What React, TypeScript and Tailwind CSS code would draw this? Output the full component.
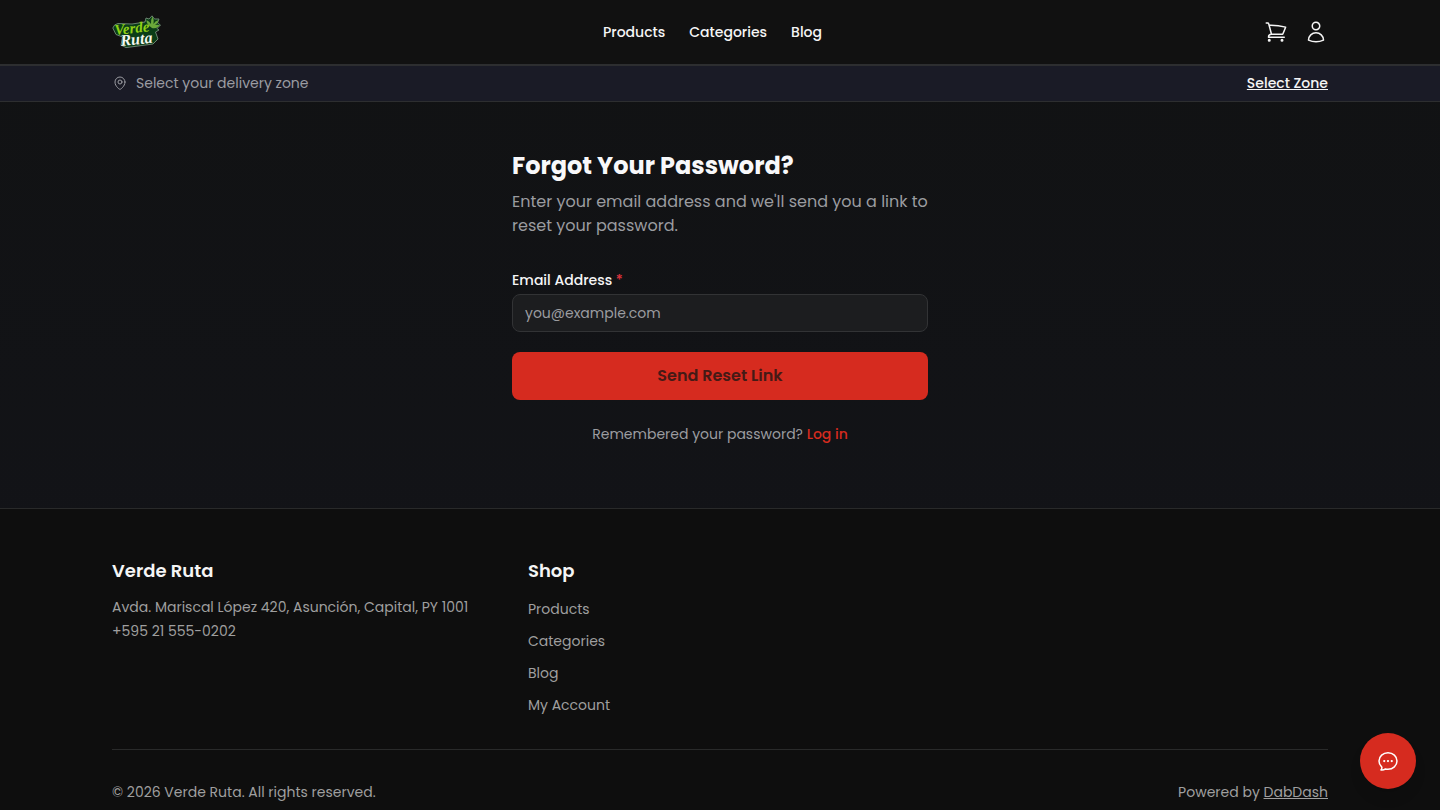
import {
  HiOutlineChatBubbleOvalLeftEllipsis,
  HiOutlineMapPin,
  HiOutlineShoppingCart,
  HiOutlineUser,
} from "react-icons/hi2";

const navLinks = ["Products", "Categories", "Blog"];
const shopLinks = ["Products", "Categories", "Blog", "My Account"];

function Logo() {
  return (
    <svg viewBox="0 0 49 34" className="h-[34px] w-[49px]" role="img" aria-label="Verde Ruta">
      <path
        d="M0.8 13 Q2 9 6 8.5 L20 9 L33 7 L34 3 L37 4 L40 0.8 L42.5 4 L47 4 L45.5 8 L48.5 10 L45 13.5 L47 15 L43.5 17 L46 24 L41 29 L30 30.5 L14 32.6 L9 30 L10.5 22 L4 19.5 Z"
        fill="#0b3d17"
        stroke="#7f9985"
        strokeWidth="0.8"
        strokeLinejoin="round"
      />
      <path
        d="M40 13 Q34 9 34.5 5 Q37.5 6.5 39 9 Q38.5 5 40.5 1.5 Q42.5 5 41.5 9 Q43 6 46.5 5 Q46 8.5 43 10 Q46 9.5 48 10.5 Q44 14 40 13Z"
        fill="#6aa83a"
      />
      <g fontFamily="'Liberation Serif', serif" fontStyle="italic" fontWeight="700">
        <text x="3" y="20" fontSize="15" fill="#8fd016" transform="rotate(-6 3 20)">
          Verde
        </text>
        <text x="9" y="31" fontSize="16" fill="#f4f7f0" transform="rotate(-6 9 31)">
          Ruta
        </text>
      </g>
    </svg>
  );
}

function Header() {
  return (
    <header className="border-b border-[#2d2e30] bg-[#111111]">
      <div className="mx-auto flex h-16 max-w-7xl items-center justify-between px-8">
        <a href="#home">
          <Logo />
        </a>
        <nav className="flex gap-6 text-sm font-medium text-[#f5f5f5]">
          {navLinks.map((label) => (
            <a key={label} href={`#${label.toLowerCase()}`}>
              {label}
            </a>
          ))}
        </nav>
        <div className="flex gap-4 text-[#f5f5f5]">
          <button type="button" aria-label="Cart">
            <HiOutlineShoppingCart className="size-6" />
          </button>
          <button type="button" aria-label="Account">
            <HiOutlineUser className="size-6" />
          </button>
        </div>
      </div>
    </header>
  );
}

function ZoneBar() {
  return (
    <div className="border-y border-[#2d2e30] bg-[#1a1b26]">
      <div className="mx-auto flex max-w-7xl items-center justify-between px-8 pt-[7px] pb-2 text-sm">
        <div className="flex items-center gap-2 text-[#9b9ca2]">
          <HiOutlineMapPin className="size-4" />
          <span>Select your delivery zone</span>
        </div>
        <button type="button" className="font-medium text-[#f5f5f5] underline">
          Select Zone
        </button>
      </div>
    </div>
  );
}

function ForgotPasswordForm() {
  return (
    <main className="mx-auto w-full max-w-md px-4 pt-12 pb-16">
      <h1 className="text-2xl font-bold text-[#f8f8fa]">Forgot Your Password?</h1>
      <p className="mt-2 text-[#9b9ca0]">
        Enter your email address and we'll send you a link to reset your password.
      </p>
      <form className="mt-8" onSubmit={(e) => e.preventDefault()}>
        <label htmlFor="email" className="block text-sm font-medium text-[#f5f5f5]">
          Email Address <span className="text-[#e0343f]">*</span>
        </label>
        <input
          id="email"
          type="email"
          required
          placeholder="you@example.com"
          className="mt-1 block w-full rounded-lg border border-[#323335] bg-[#1c1d1f] px-3 py-2 text-sm text-[#f5f5f5] placeholder:text-[#9b9ca0]"
        />
        <button type="submit" className="mt-5 h-12 w-full rounded-lg bg-[#d62b1f] font-semibold text-[#451a16]">
          Send Reset Link
        </button>
      </form>
      <p className="mt-6 text-center text-sm text-[#9b9ca0]">
        Remembered your password?{" "}
        <a href="#login" className="font-medium text-[#d62b1f]">
          Log in
        </a>
      </p>
    </main>
  );
}

function Footer() {
  return (
    <footer className="border-t border-[#292a2a] bg-[#0e0e0e] text-sm text-[#9f9f9f]">
      <div className="mx-auto max-w-7xl px-8 py-12">
        <div className="grid gap-8 md:grid-cols-3">
          <div>
            <h2 className="mb-3 text-lg font-semibold text-[#f5f5f5]">Verde Ruta</h2>
            <address className="space-y-1 not-italic">
              <p>Avda. Mariscal López 420, Asunción, Capital, PY 1001</p>
              <p>+595 21 555-0202</p>
            </address>
          </div>
          <div>
            <h2 className="mb-3 text-lg font-semibold text-[#f5f5f5]">Shop</h2>
            <ul className="space-y-2 leading-6">
              {shopLinks.map((label) => (
                <li key={label}>
                  <a href={`#${label.toLowerCase().replace(" ", "-")}`}>{label}</a>
                </li>
              ))}
            </ul>
          </div>
        </div>
        <div className="mt-8 flex justify-between border-t border-[#292a2a] pt-8">
          <p>© 2026 Verde Ruta. All rights reserved.</p>
          <p>
            Powered by{" "}
            <a href="#dabdash" className="underline">
              DabDash
            </a>
          </p>
        </div>
      </div>
    </footer>
  );
}

export default function App() {
  return (
    <div className="min-h-screen bg-linear-to-b from-[#111213] to-[#13141a] font-[Poppins,Inter,sans-serif]">
      <Header />
      <ZoneBar />
      <ForgotPasswordForm />
      <Footer />
      <button
        type="button"
        aria-label="Open chat"
        className="fixed right-6 bottom-[21px] flex size-14 items-center justify-center rounded-full bg-[#d62b1f] text-white shadow-lg"
      >
        <HiOutlineChatBubbleOvalLeftEllipsis className="size-6" />
      </button>
    </div>
  );
}
